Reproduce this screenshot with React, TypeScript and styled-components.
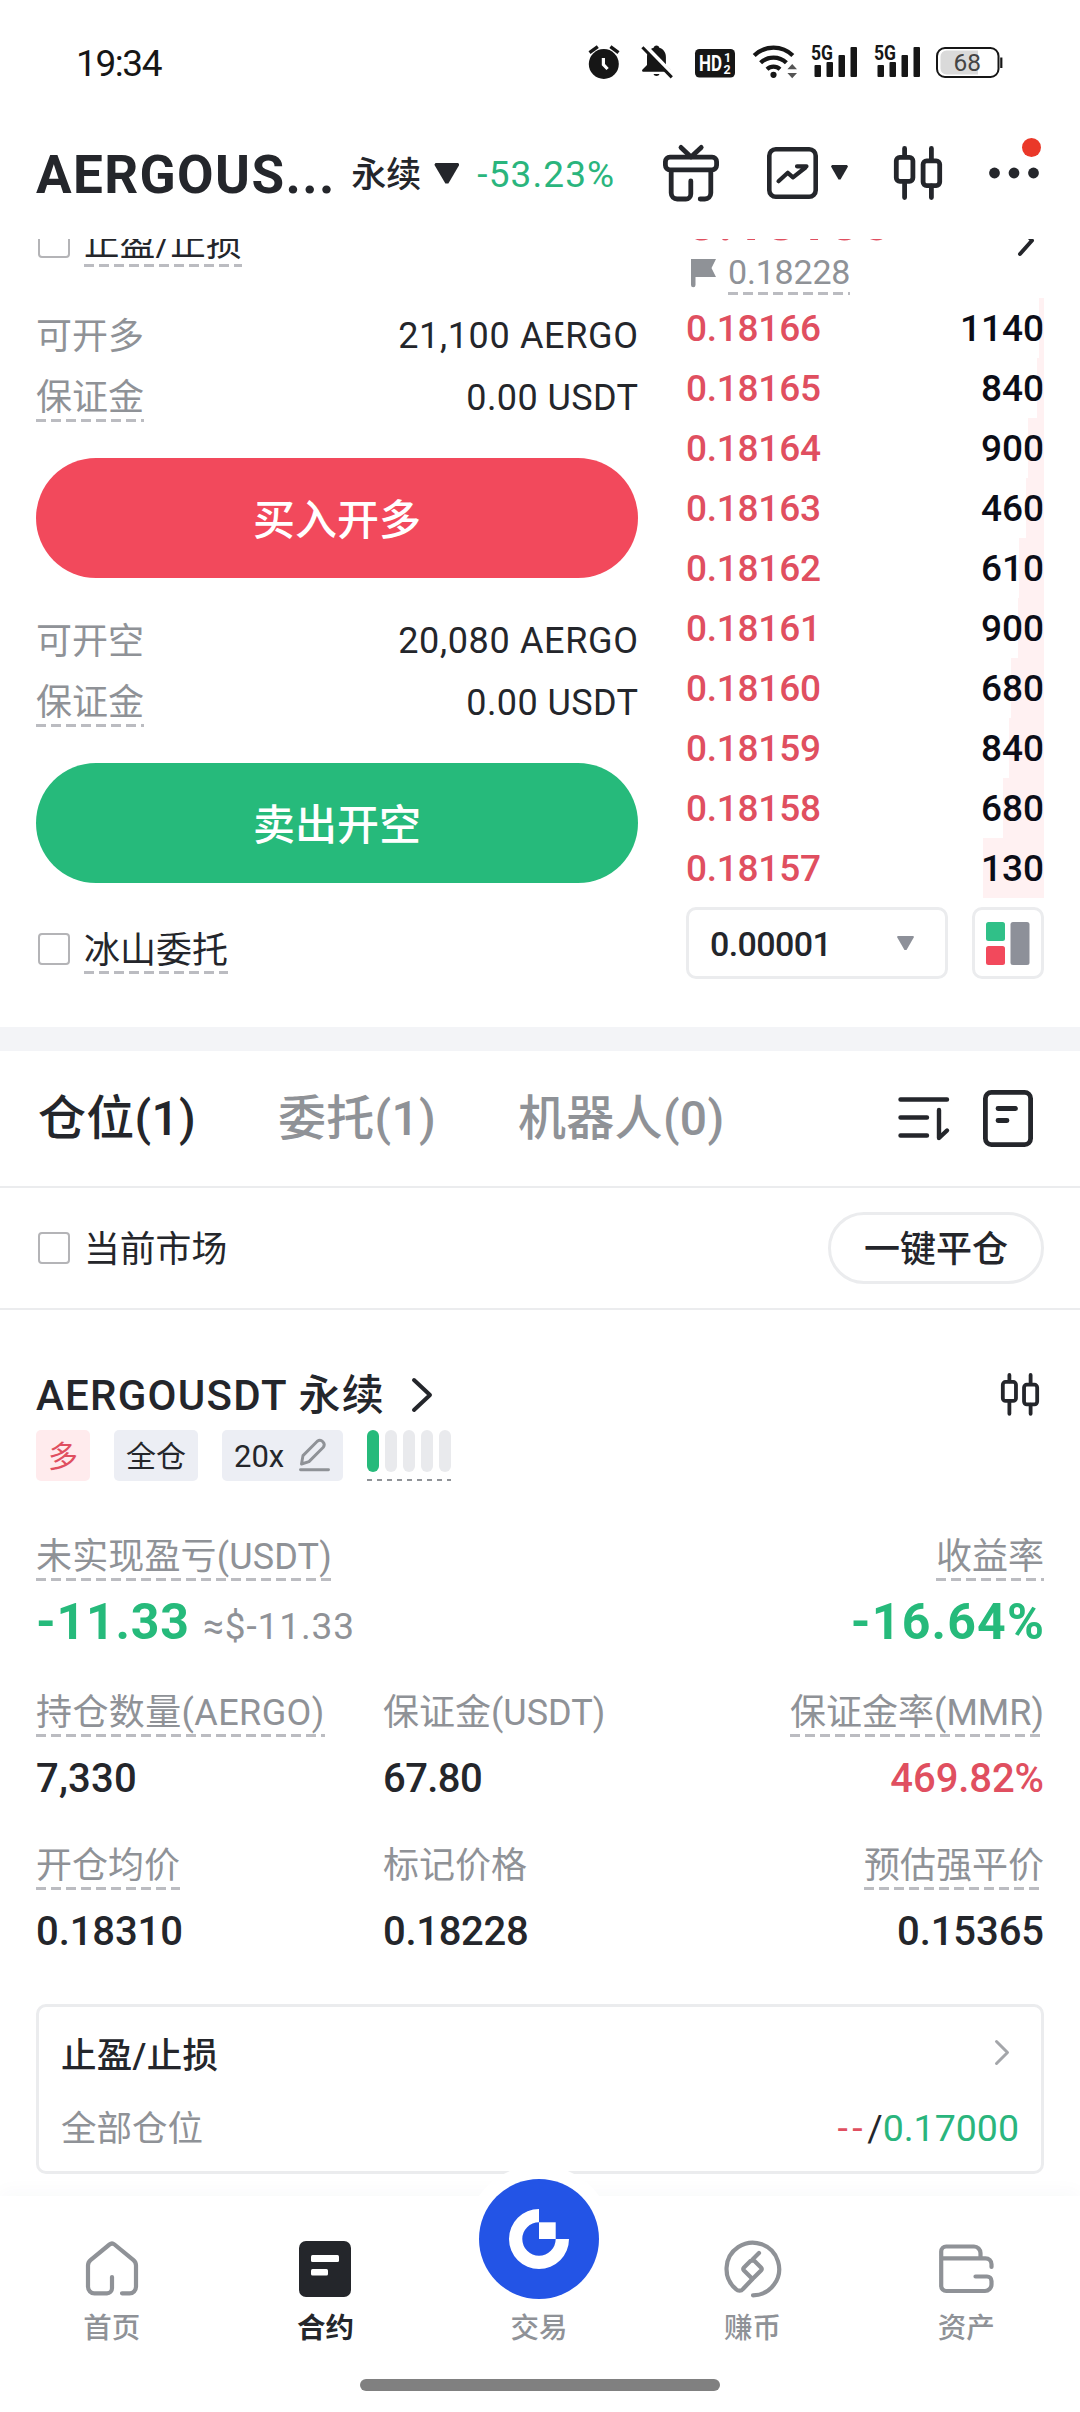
import React from "react";
import styled, { createGlobalStyle, css } from "styled-components";

const c = {
  ink: "#24262b",
  gray: "#8f9297",
  red: "#e04f60",
  redFill: "#f2495c",
  green: "#2ab57d",
  greenFill: "#26ba7b",
  line: "#ebecee",
  tag: "#eceef4",
};

const Global = createGlobalStyle`
  * { box-sizing: border-box; }
  body {
    margin: 0;
    background: #fff;
    color: ${c.ink};
    font-family: Roboto, "Noto Sans CJK SC", sans-serif;
  }
  svg { display: block; flex: none; overflow: visible; }
  button { font: inherit; border: 0; padding: 0; margin: 0; }
`;

const Screen = styled.div`
  width: 1080px;
  height: 2412px;
  display: flex;
  flex-direction: column;
  overflow: hidden;
  background: #fff;
`;

type TextProps = {
  $size?: number;
  $weight?: number;
  $color?: string;
  $ls?: number;
  $lh?: number;
  $drop?: number;
};

const Text = styled.span<TextProps>`
  font-size: ${(p) => p.$size ?? 36}px;
  font-weight: ${(p) => p.$weight ?? 400};
  color: ${(p) => p.$color ?? c.ink};
  letter-spacing: ${(p) => p.$ls ?? 0}px;
  margin-right: ${(p) => -(p.$ls ?? 0)}px;
  line-height: ${(p) => p.$lh ?? 44}px;
  padding-top: ${(p) => p.$drop ?? 1.5}px;
  margin-bottom: ${(p) => -(p.$drop ?? 1.5)}px;
  white-space: pre;
`;

const Hint = styled(Text)`
  padding-top: ${(p) => p.$drop ?? 1}px;
  padding-bottom: ${(p) => 3 - (p.$drop ?? 1)}px;
  margin-bottom: -3px;
  background: repeating-linear-gradient(90deg, #bbbcc1 0 10px, transparent 10px 15px) left bottom / 100% 3px no-repeat;
`;

/* ---------- status bar ---------- */

const StatusBar = styled.div`
  height: 124px;
  flex: none;
  display: flex;
  align-items: center;
  padding: 0 77px 0 76px;
`;

const StatusIcons = styled.div`
  display: flex;
  align-items: center;
  margin-left: auto;
`;

const Slot = styled.div<{ $gap: number }>`
  display: flex;
  margin-left: ${(p) => p.$gap}px;
`;

const AlarmIcon = () => (
  <svg width="32" height="36" viewBox="0 0 32 36" fill="none">
    <circle cx="15.8" cy="20" r="15" fill="#161616" />
    <path d="M1.5 8.6 9.8 2.6M22.4 2.6 30.5 8.6" stroke="#161616" strokeWidth="3.4" />
    <path d="M15.4 14v6.6l4.2 4.4" stroke="#fff" strokeWidth="3.2" />
  </svg>
);

const MutedBellIcon = () => (
  <svg width="32" height="36" viewBox="0 0 32 36" fill="none">
    <path d="M15.5 1.6c1.6 0 2.6 1 2.8 2.2 4.2 1.3 6.6 4.8 6.6 9.2v8l4.8 4.5c.8.9.3 2.3-.9 2.3H2.200c-1.200 0-1.500-1.400-.7-2.300L6 21v-8c0-4.400 2.500-7.900 6.700-9.200.2-1.200 1.200-2.200 2.800-2.200Z" fill="#161616" />
    <path d="M12.5 30h6c-.4 1.3-1.5 2-3 2s-2.600-.7-3-2Z" fill="#161616" />
    <path d="M3.8 1.5 33 31.5" stroke="#fff" strokeWidth="4" />
    <path d="M1.4 3.3 30.8 33.4" stroke="#161616" strokeWidth="3" />
  </svg>
);

const HdIcon = () => (
  <svg width="40" height="36" viewBox="0 0 40 36">
    <rect y="5" width="40" height="28.5" rx="4.5" fill="#161616" />
    <g fill="#fff" fontFamily="Roboto, sans-serif" fontWeight="700">
      <text x="4" y="26.5" fontSize="22.5" textLength="23" lengthAdjust="spacingAndGlyphs">HD</text>
      <text x="29" y="17.5" fontSize="12.5">1</text>
      <text x="28.5" y="30.2" fontSize="12.5">2</text>
    </g>
  </svg>
);

const WifiIcon = () => (
  <svg width="44" height="36" viewBox="0 0 44 36" fill="none">
    <path d="M1.200 11.600a27.500 27.500 0 0 1 38.600 0M7.600 18.800a18.500 18.500 0 0 1 25.800 0M14 25.200a9.500 9.500 0 0 1 13 0" stroke="#161616" strokeWidth="4.200" />
    <circle cx="20.5" cy="30.8" r="3.1" fill="#161616" />
    <path d="M39.200 20l4.800 5.200h-9.600ZM39.200 34.200l4.800-5.200h-9.600Z" fill="#555" />
  </svg>
);

const SignalIcon = () => (
  <svg width="46" height="36" viewBox="0 0 46 36" fill="#161616">
    <text x="0" y="16.3" fontSize="21" fontWeight="700" fontFamily="Roboto, sans-serif" textLength="22" lengthAdjust="spacingAndGlyphs">5G</text>
    <rect x="3.5" y="21" width="6.5" height="12" rx="1" />
    <rect x="15.5" y="18" width="6.5" height="15" rx="1" />
    <rect x="27.5" y="11" width="6.5" height="22" rx="1" />
    <rect x="39.5" y="3" width="6.5" height="30" rx="1" />
  </svg>
);

const BatteryIcon = () => (
  <svg width="67" height="36" viewBox="0 0 67 36" fill="none">
    <path d="M10.500 6.500H42v24H10.500a6 6 0 0 1-6-6v-12a6 6 0 0 1 6-6Z" fill="#dadada" />
    <rect x="1" y="4" width="61.5" height="29" rx="8" stroke="#161616" strokeWidth="2" />
    <path d="M65.300 13.500v10.500" stroke="#161616" strokeWidth="2.2" />
    <text x="17.5" y="27.3" fontSize="24.5" fill="#444" fontFamily="Roboto, sans-serif">68</text>
  </svg>
);

/* ---------- header ---------- */

const Header = styled.header`
  height: 115px;
  flex: none;
  display: flex;
  align-items: flex-start;
  padding: 19px 41px 0 36px;
`;

const PairButton = styled.div`
  display: flex;
  align-items: center;
  height: 61px;
`;

const HeaderIcons = styled.div`
  height: 59px;
  display: flex;
  align-items: center;
  margin-left: auto;
`;

const Arrow = styled.div<{ $w: number; $h: number; $color?: string }>`
  width: ${(p) => p.$w}px;
  height: ${(p) => p.$h}px;
  background: ${(p) => p.$color ?? c.ink};
  clip-path: polygon(6% 0, 94% 0, 100% 10%, 56% 96%, 44% 96%, 0 10%);
  flex: none;
`;

const MoreWrap = styled.div`
  position: relative;
`;

const RedDot = styled.i`
  position: absolute;
  right: -2px;
  top: -29px;
  width: 19px;
  height: 19px;
  border-radius: 50%;
  background: #ea3829;
`;

const GiftIcon = () => (
  <svg width="56" height="57" viewBox="0 0 56 57" fill="none" stroke={c.ink} strokeWidth="4.8" strokeLinecap="round" strokeLinejoin="round">
    <path d="M18 3.400 28 13 38.200 3.400" />
    <rect x="2.4" y="13.2" width="51.2" height="12.6" rx="4.5" />
    <path d="M8.200 27.500V49a6 6 0 0 0 6 6h8.600a5 5 0 0 0 5-5V37M37.200 55h4.600a6 6 0 0 0 6-6V27.500" />
  </svg>
);

const TrendIcon = () => (
  <svg width="51" height="52" viewBox="0 0 51 52" fill="none" stroke={c.ink} strokeWidth="4.6" strokeLinecap="round" strokeLinejoin="round">
    <rect x="2.3" y="2.3" width="46.4" height="47.4" rx="6.5" />
    <path d="M11.500 34.200 20.800 25.800 26 30.300 38.500 20.500M30 19.300H39.500" strokeWidth="4.2" />
  </svg>
);

const CandleIcon = ({ w = 48 }: { w?: number }) => (
  <svg width={w} height={(w * 54) / 48} viewBox="0 0 48 54" fill="none" stroke={c.ink} strokeWidth="4.8" strokeLinecap="round">
    <rect x="2.3" y="11.3" width="16.6" height="24" rx="3.5" />
    <rect x="29.1" y="14.8" width="16.6" height="24.8" rx="3.5" />
    <path d="M10.600 2.500v8M10.600 36v15.500M37.400 2.500v11.500M37.400 40v11.500" />
  </svg>
);

const DotsIcon = () => (
  <svg width="50" height="12" viewBox="0 0 50 12" fill={c.ink}>
    <circle cx="5.5" cy="6" r="5.4" />
    <circle cx="25" cy="6" r="5.4" />
    <circle cx="44.5" cy="6" r="5.4" />
  </svg>
);

/* ---------- trade panel ---------- */

const Viewport = styled.main`
  height: 1957px;
  flex: none;
  overflow: hidden;
`;

const TradePanel = styled.section`
  display: flex;
  justify-content: space-between;
  height: 837px;
  margin-top: -49px;
  padding: 0 36px;
`;

const OrderForm = styled.div`
  width: 602px;
  padding-top: 28px;
  display: flex;
  flex-direction: column;
`;

const CheckRow = styled.label`
  display: flex;
  align-items: center;
  height: 48px;
`;

const Box = styled.i`
  width: 32px;
  height: 32px;
  margin: 0 14px 0 2px;
  border: 2px solid #b4b4b7;
  border-radius: 4px;
  flex: none;
`;

const FormRows = styled.div<{ $top: number }>`
  margin-top: ${(p) => p.$top}px;
`;

const FormRow = styled.div`
  display: flex;
  align-items: center;
  justify-content: space-between;
  height: 62px;
`;

const OrderButton = styled.button<{ $bg: string }>`
  height: 120px;
  margin-top: 30px;
  border-radius: 60px;
  background: ${(p) => p.$bg};
  display: flex;
  align-items: center;
  justify-content: center;
`;

const Book = styled.div`
  width: 358px;
  display: flex;
  flex-direction: column;
`;

const LastPrice = styled.div`
  height: 62px;
  display: flex;
  justify-content: space-between;
  padding-right: 10px;
  svg { margin-top: 35px; }
`;

const MarkPrice = styled.div`
  display: flex;
  align-items: center;
  height: 40px;
  margin-bottom: 6px;
  padding-left: 5px;
  gap: 11px;
`;

const BookRow = styled.div<{ $depth: number }>`
  height: 60px;
  display: flex;
  align-items: center;
  justify-content: space-between;
  background: linear-gradient(#fff1f2, #fff1f2) right / ${(p) => p.$depth}px 100% no-repeat;
`;

const BookControls = styled.div`
  display: flex;
  justify-content: space-between;
  margin-top: 9px;
`;

const outlined = css`
  height: 72px;
  border: 3px solid ${c.line};
  border-radius: 10px;
  display: flex;
  align-items: center;
`;

const StepSelect = styled.div`
  ${outlined}
  width: 262px;
  padding: 0 31px 0 21px;
  justify-content: space-between;
`;

const LayoutButton = styled.div`
  ${outlined}
  width: 72px;
  justify-content: center;
`;

const FlagIcon = () => (
  <svg width="26" height="30" viewBox="0 0 26 30" fill={c.gray}>
    <path d="M0 2h25l-4.500 9 4.500 9H4.500v8a2 2 0 0 1-4.500 0Z" />
  </svg>
);

const LayoutIcon = () => (
  <svg width="44" height="43" viewBox="0 0 44 43">
    <rect width="19" height="19" rx="2.5" fill="#30c088" />
    <rect y="24" width="19" height="19" rx="2.5" fill={c.redFill} />
    <rect x="24.5" width="19" height="43" rx="2.5" fill="#8d9099" />
  </svg>
);

const Chevron = ({ w, h, color = c.ink, sw = 4 }: { w: number; h: number; color?: string; sw?: number }) => (
  <svg width={w} height={h} viewBox={`0 0 ${w} ${h}`} fill="none" stroke={color} strokeWidth={sw} strokeLinecap="round" strokeLinejoin="round">
    <path d={`M${sw / 2} ${sw / 2} ${w - sw / 2} ${h / 2} ${sw / 2} ${h - sw / 2}`} />
  </svg>
);

const asks: [string, string, number][] = [
  ["0.18166", "1140", 5],
  ["0.18165", "840", 7],
  ["0.18164", "900", 16],
  ["0.18163", "460", 18],
  ["0.18162", "610", 25],
  ["0.18161", "900", 26],
  ["0.18160", "680", 33],
  ["0.18159", "840", 35],
  ["0.18158", "680", 41],
  ["0.18157", "130", 61],
];

/* ---------- positions ---------- */

const Band = styled.div`
  height: 24px;
  background: #f3f4f7;
`;

const Tabs = styled.nav`
  height: 137px;
  display: flex;
  align-items: center;
  padding: 0 47px 0 38px;
  border-bottom: 2px solid ${c.line};
`;

const Tab = styled.div<{ $w: number }>`
  width: ${(p) => p.$w}px;
`;

const TabTools = styled.div`
  display: flex;
  align-items: center;
  gap: 33px;
  margin-left: auto;
`;

const FilterRow = styled.div`
  height: 122px;
  display: flex;
  align-items: center;
  justify-content: space-between;
  padding: 0 36px;
  border-bottom: 2px solid ${c.line};
`;

const PillButton = styled.button`
  width: 216px;
  height: 72px;
  border: 3px solid ${c.line};
  border-radius: 36px;
  background: #fff;
  display: flex;
  align-items: center;
  justify-content: center;
`;

const SortIcon = () => (
  <svg width="52" height="46" viewBox="0 0 52 46" fill="none" stroke={c.ink} strokeWidth="4.4" strokeLinecap="round" strokeLinejoin="round">
    <path d="M2.500 3.500H49M2.500 21.500H29M2.500 39.500H29M41 14V42L49 34.500" />
  </svg>
);

const NoteIcon = () => (
  <svg width="50" height="57" viewBox="0 0 50 57" fill="none" stroke={c.ink} strokeWidth="4.8" strokeLinecap="round">
    <rect x="2.4" y="2.4" width="45.2" height="52.2" rx="6" />
    <path d="M15 18.500H32.500M15 30.500H24" />
  </svg>
);

const Position = styled.section`
  padding: 60px 36px 0;
`;

const PositionTitle = styled.div`
  height: 50px;
  display: flex;
  align-items: center;
`;

const Push = styled.div`
  margin-left: auto;
  margin-right: 5px;
  padding-bottom: 2px;
`;

const Tags = styled.div`
  display: flex;
  height: 51px;
  margin-top: 10px;
  gap: 24px;
`;

const Tag = styled.div<{ $bg?: string }>`
  display: flex;
  align-items: center;
  padding: 0 12px;
  border-radius: 5px;
  background: ${(p) => p.$bg ?? c.tag};
  svg { margin: 0 1px 0 15px; }
`;

const Risk = styled.div`
  display: flex;
  gap: 6px;
  padding-bottom: 9px;
  background: repeating-linear-gradient(90deg, #8f9297 0 5px, transparent 5px 10px) left bottom / 100% 2px no-repeat;
`;

const RiskBar = styled.i<{ $on?: boolean }>`
  width: 12px;
  border-radius: 6px;
  background: ${(p) => (p.$on ? c.greenFill : "#e9eaed")};
`;

const EditIcon = () => (
  <svg width="31" height="34" viewBox="0 0 31 34" fill="none" stroke={c.gray} strokeWidth="2.9" strokeLinecap="round" strokeLinejoin="round">
    <path d="M2.500 25 4 16.600 18.300 2.300a4.300 4.300 0 0 1 6 6L10 22.600Z" />
    <path d="M1.500 30.700H29.500" />
  </svg>
);

const PnlRow = styled.div`
  display: flex;
  justify-content: space-between;
  margin-top: 53px;
`;

const Column = styled.div<{ $end?: boolean }>`
  display: flex;
  flex-direction: column;
  align-items: ${(p) => (p.$end ? "flex-end" : "flex-start")};
`;

const PnlValue = styled.div`
  display: flex;
  align-items: baseline;
  height: 59px;
  margin-top: 14px;
`;

const StatGrid = styled.div`
  display: grid;
  grid-template-columns: 347px 1fr auto;
  row-gap: 41px;
  margin-top: 39px;
`;

const StatValue = styled(Text)`
  margin-top: 20px;
`;

const StopCard = styled.div`
  height: 170px;
  margin-top: 49px;
  padding: 26px 22px;
  border: 3px solid ${c.line};
  border-radius: 10px;
  display: flex;
  flex-direction: column;
  gap: 28px;
`;

const StopRow = styled.div`
  height: 44px;
  display: flex;
  align-items: center;
  justify-content: space-between;
  svg { margin: 0 10px 6px 0; }
`;

const Dashes = styled.span`
  color: ${c.red};
  letter-spacing: 4.5px;
`;

const Divider = styled.span`
  color: ${c.ink};
`;

type StatProps = { label: string; value: string; ls?: number; vls?: number; hint?: boolean; end?: boolean; color?: string };

const Stat = ({ label, value, ls, vls = -0.1, hint, end, color }: StatProps) => {
  const Label = hint ? Hint : Text;
  return (
    <Column $end={end}>
      <Label $color={c.gray} $ls={ls} $drop={1}>{label}</Label>
      <StatValue $size={40} $weight={500} $lh={48} $drop={1} $color={color} $ls={vls}>{value}</StatValue>
    </Column>
  );
};

/* ---------- bottom navigation ---------- */

const BottomNav = styled.nav`
  position: relative;
  z-index: 1;
  height: 216px;
  flex: none;
  background: #fff;
  box-shadow: 0 -4px 18px rgba(40, 50, 80, 0.03);
  display: flex;
  flex-direction: column;
  align-items: center;
`;

const NavItems = styled.div`
  width: 1069px;
  height: 183px;
  display: flex;
  padding: 45px 1px 0 0;
  margin-right: 1px;
`;

const NavItem = styled.div`
  flex: 1;
  display: flex;
  flex-direction: column;
  align-items: center;
`;

const NavIcon = styled.div`
  height: 56px;
  margin-bottom: 14px;
  display: flex;
  align-items: center;
`;

const TradeDisc = styled.div`
  width: 120px;
  height: 120px;
  margin-top: -62px;
  margin-bottom: 12px;
  border-radius: 50%;
  background: #2354e6;
  box-shadow: 0 0 0 14px #fff;
  display: flex;
  align-items: center;
  justify-content: center;
`;

const HomeIndicator = styled.div`
  width: 360px;
  height: 12px;
  border-radius: 6px;
  background: #808080;
`;

const HomeIcon = () => (
  <svg width="54" height="56" viewBox="0 0 54 56" fill="none" stroke={c.gray} strokeWidth="4.2" strokeLinecap="round" strokeLinejoin="round">
    <path d="M37 52.300H44.500a6.500 6.500 0 0 0 6.500-6.500V24.500a7 7 0 0 0-2.500-5.300L29.500 3.500a4 4 0 0 0-5 0L5.500 19.200A7 7 0 0 0 3 24.500V45.800a6.500 6.500 0 0 0 6.500 6.500H22a5 5 0 0 0 5-5V36" />
  </svg>
);

const ContractIcon = () => (
  <svg width="52" height="56" viewBox="0 0 52 56">
    <rect width="52" height="56" rx="7" fill={c.ink} />
    <rect x="12" y="14" width="28" height="7" rx="1.5" fill="#fff" />
    <rect x="12" y="28" width="17" height="6.5" rx="1.5" fill="#fff" />
  </svg>
);

const LogoIcon = () => (
  <svg width="60" height="60" viewBox="0 0 60 60" fill="#fff">
    <path d="M30 0A30 30 0 1 0 60 30H46.700A16.700 16.700 0 1 1 30 13.300Z" />
    <path d="M30 13.300H46.700V30H30Z" />
  </svg>
);

const EarnIcon = () => (
  <svg width="58" height="58" viewBox="-29 -29 58 58" fill="none" stroke={c.gray} strokeWidth="4.2" strokeLinecap="round" strokeLinejoin="round">
    <path d="M0 26.300A26.300 26.300 0 1 0-17 20.200C-15 22-12 22.500-10 20L-.5 10" />
    <path d="M6-16-.5-9.500M-2.300-8.200-9-1.500a2.200 2.200 0 0 0 0 3L-2 8.500a2.200 2.200 0 0 0 3 0L8 1.500a2.200 2.200 0 0 0 0-3L1-8.500Z" />
  </svg>
);

const WalletIcon = () => (
  <svg width="55" height="50" viewBox="0 0 55 50" fill="none" stroke={c.gray} strokeWidth="4.2" strokeLinecap="round" strokeLinejoin="round">
    <path d="M2.200 14.300V7.500a5 5 0 0 1 5-5H35a6.500 6.500 0 0 1 6.500 6.500V14M2.200 14.300H46.500a6 6 0 0 1 6 6V23M2.200 14.300V42a5 5 0 0 0 5 5H46a6.500 6.500 0 0 0 6.500-6.500V37a4.500 4.500 0 0 0-4.500-4.500H36.500" />
  </svg>
);

export default function App() {
  return (
    <Screen>
      <Global />
      <StatusBar>
        <Text $size={37} $color="#161616" $ls={-1.4}>19:34</Text>
        <StatusIcons>
          <AlarmIcon />
          <Slot $gap={21}><MutedBellIcon /></Slot>
          <Slot $gap={22}><HdIcon /></Slot>
          <Slot $gap={18}><WifiIcon /></Slot>
          <Slot $gap={14}><SignalIcon /></Slot>
          <Slot $gap={17}><SignalIcon /></Slot>
          <Slot $gap={16}><BatteryIcon /></Slot>
        </StatusIcons>
      </StatusBar>

      <Header>
        <PairButton>
          <Text $size={53} $weight={700} $lh={61} $ls={1.4}>AERGOUS...</Text>
          <Slot $gap={17}><Text $size={35} $weight={500} $drop={2}>永续</Text></Slot>
          <Slot $gap={13}><Arrow $w={25} $h={22} /></Slot>
          <Slot $gap={18}><Text $size={37} $color={c.green} $ls={1.1}>-53.23%</Text></Slot>
        </PairButton>
        <HeaderIcons>
          <GiftIcon />
          <Slot $gap={48}><TrendIcon /></Slot>
          <Slot $gap={13}><Arrow $w={17} $h={15} /></Slot>
          <Slot $gap={46}><CandleIcon /></Slot>
          <Slot $gap={47}>
            <MoreWrap>
              <DotsIcon />
              <RedDot />
            </MoreWrap>
          </Slot>
        </HeaderIcons>
      </Header>

      <Viewport>
        <TradePanel>
          <OrderForm>
            <CheckRow>
              <Box />
              <Hint $size={35.5} $ls={0.2} $drop={1.5}>止盈/止损</Hint>
            </CheckRow>
            <FormRows $top={38}>
              <FormRow>
                <Text $color={c.gray}>可开多</Text>
                <Text $ls={0.65} $drop={0.5}>21,100 AERGO</Text>
              </FormRow>
              <FormRow>
                <Hint $color={c.gray}>保证金</Hint>
                <Text $ls={0.4} $drop={0.5}>0.00 USDT</Text>
              </FormRow>
            </FormRows>
            <OrderButton $bg={c.redFill}>
              <Text $size={42} $weight={500} $color="#fff" $drop={3}>买入开多</Text>
            </OrderButton>
            <FormRows $top={31}>
              <FormRow>
                <Text $color={c.gray}>可开空</Text>
                <Text $ls={0.65} $drop={0.5}>20,080 AERGO</Text>
              </FormRow>
              <FormRow>
                <Hint $color={c.gray}>保证金</Hint>
                <Text $ls={0.4} $drop={0.5}>0.00 USDT</Text>
              </FormRow>
            </FormRows>
            <OrderButton $bg={c.greenFill}>
              <Text $size={42} $weight={500} $color="#fff" $drop={3}>卖出开空</Text>
            </OrderButton>
            <FormRows $top={42}>
              <CheckRow>
                <Box />
                <Hint $size={36} $drop={1.5}>冰山委托</Hint>
              </CheckRow>
            </FormRows>
          </OrderForm>

          <Book>
            <LastPrice>
              <Text $size={55} $weight={700} $color={c.red} $lh={61} $drop={0.5}>0.18156</Text>
              <Chevron w={16} h={31} />
            </LastPrice>
            <MarkPrice>
              <FlagIcon />
              <Hint $size={34} $color={c.gray} $lh={40} $ls={-0.2} $drop={0}>0.18228</Hint>
            </MarkPrice>
            {asks.map(([price, qty, depth]) => (
              <BookRow key={price} $depth={depth}>
                <Text $weight={500} $color={c.red} $size={37} $ls={-0.25} $drop={1}>{price}</Text>
                <Text $weight={500} $color="#0b0d17" $size={37} $drop={1}>{qty}</Text>
              </BookRow>
            ))}
            <BookControls>
              <StepSelect>
                <Text $size={34} $weight={500} $ls={-0.6} $drop={0.5}>0.00001</Text>
                <Arrow $w={17} $h={15} $color="#8d9099" />
              </StepSelect>
              <LayoutButton><LayoutIcon /></LayoutButton>
            </BookControls>
          </Book>
        </TradePanel>

        <Band />

        <Tabs>
          <Tab $w={240}><Text $size={48} $weight={500} $lh={60} $ls={0.3}>仓位(1)</Text></Tab>
          <Tab $w={240}><Text $size={48} $weight={500} $lh={60} $ls={0.3} $color={c.gray}>委托(1)</Text></Tab>
          <Tab $w={240}><Text $size={48} $weight={500} $lh={60} $ls={0.3} $color={c.gray}>机器人(0)</Text></Tab>
          <TabTools>
            <SortIcon />
            <NoteIcon />
          </TabTools>
        </Tabs>

        <FilterRow>
          <CheckRow>
            <Box />
            <Text $size={35.8} $drop={2}>当前市场</Text>
          </CheckRow>
          <PillButton><Text $weight={500} $drop={2}>一键平仓</Text></PillButton>
        </FilterRow>

        <Position>
          <PositionTitle>
            <Text $size={42} $weight={500} $lh={50} $ls={1.25} $drop={1}>AERGOUSDT 永续</Text>
            <Slot $gap={28}><Chevron w={20} h={34} /></Slot>
            <Push><CandleIcon w={38} /></Push>
          </PositionTitle>
          <Tags>
            <Tag $bg="#ffebed"><Text $size={30} $color={c.red}>多</Text></Tag>
            <Tag><Text $size={30}>全仓</Text></Tag>
            <Tag><Text $size={31}>20x</Text><EditIcon /></Tag>
            <Risk>
              <RiskBar $on />
              <RiskBar />
              <RiskBar />
              <RiskBar />
              <RiskBar />
            </Risk>
          </Tags>

          <PnlRow>
            <Column>
              <Hint $color={c.gray} $ls={0.15} $drop={0.5}>未实现盈亏(USDT)</Hint>
              <PnlValue>
                <Text $size={50} $weight={700} $color={c.greenFill} $lh={60} $drop={0} $ls={0.8}>-11.33</Text>
                <Slot $gap={14}><Text $size={37} $color={c.gray} $drop={0} $ls={0.9}>≈$-11.33</Text></Slot>
              </PnlValue>
            </Column>
            <Column $end>
              <Hint $color={c.gray} $drop={0.5}>收益率</Hint>
              <PnlValue>
                <Text $size={50} $weight={700} $color={c.greenFill} $lh={60} $drop={0} $ls={1.2}>-16.64%</Text>
              </PnlValue>
            </Column>
          </PnlRow>

          <StatGrid>
            <Stat hint label="持仓数量(AERGO)" value="7,330" ls={0.4} vls={0.2} />
            <Stat label="保证金(USDT)" value="67.80" vls={-0.6} />
            <Stat hint end label="保证金率(MMR)" value="469.82%" color={c.red} />
            <Stat hint label="开仓均价" value="0.18310" />
            <Stat label="标记价格" value="0.18228" vls={-0.3} />
            <Stat hint end label="预估强平价" value="0.15365" />
          </StatGrid>

          <StopCard>
            <StopRow>
              <Text $size={35.5} $weight={500} $ls={0.3} $drop={1}>止盈/止损</Text>
              <Chevron w={14} h={25} color="#a4a6aa" sw={3} />
            </StopRow>
            <StopRow>
              <Text $size={35.5} $color={c.gray}>全部仓位</Text>
              <Text $size={37.5} $color={c.green} $drop={0.5}>
                <Dashes>--</Dashes>
                <Divider>/</Divider>
                0.17000
              </Text>
            </StopRow>
          </StopCard>
        </Position>
      </Viewport>

      <BottomNav>
        <NavItems>
          <NavItem>
            <NavIcon><HomeIcon /></NavIcon>
            <Text $size={28.5} $weight={500} $color={c.gray} $lh={32}>首页</Text>
          </NavItem>
          <NavItem>
            <NavIcon><ContractIcon /></NavIcon>
            <Text $size={28.5} $weight={700} $lh={32}>合约</Text>
          </NavItem>
          <NavItem>
            <TradeDisc><LogoIcon /></TradeDisc>
            <Text $size={28.5} $weight={500} $color={c.gray} $lh={32}>交易</Text>
          </NavItem>
          <NavItem>
            <NavIcon><EarnIcon /></NavIcon>
            <Text $size={28.5} $weight={500} $color={c.gray} $lh={32}>赚币</Text>
          </NavItem>
          <NavItem>
            <NavIcon><WalletIcon /></NavIcon>
            <Text $size={28.5} $weight={500} $color={c.gray} $lh={32}>资产</Text>
          </NavItem>
        </NavItems>
        <HomeIndicator />
      </BottomNav>
    </Screen>
  );
}
